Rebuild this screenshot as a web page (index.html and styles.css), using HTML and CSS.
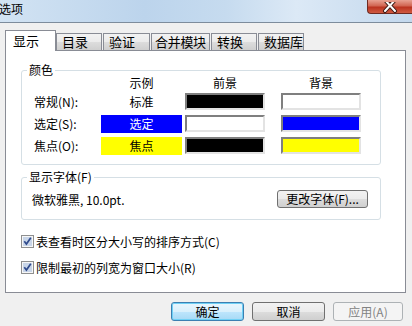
FILE: index.html
```html
<!DOCTYPE html>
<html lang="zh-CN">
<head>
<meta charset="UTF-8">
<title>选项</title>
<link rel="stylesheet" href="styles.css">
</head>
<body>

<div class="titlebar">
  <span class="title">选项</span>
  <div class="close-btn">
    <svg width="16" height="11" viewBox="0 0 16 11">
      <path d="M3 -2 L13 9 M13 -2 L3 9" stroke="#3d1a16" stroke-width="4" stroke-linecap="round"/>
      <path d="M3 -2 L13 9 M13 -2 L3 9" stroke="#ffffff" stroke-width="2" stroke-linecap="round"/>
    </svg>
  </div>
</div>

<div class="client">
  <div class="tabs">
    <div class="tab tab-active">显示</div>
    <div class="tab tab-w46">目录</div>
    <div class="tab tab-w47">验证</div>
    <div class="tab tab-w59">合并模块</div>
    <div class="tab tab-w46">转换</div>
    <div class="tab tab-w46">数据库</div>
  </div>

  <div class="panel">
    <fieldset class="group">
      <legend>颜色</legend>
      <div class="color-grid">
        <span></span>
        <span class="col-head">示例</span>
        <span class="col-head col-fg">前景</span>
        <span class="col-head">背景</span>

        <span class="row-label">常规(N):</span>
        <span class="sample">标准</span>
        <span class="swatch swatch-fg sw-black"></span>
        <span class="swatch sw-white"></span>

        <span class="row-label">选定(S):</span>
        <span class="sample sample-blue">选定</span>
        <span class="swatch swatch-fg sw-white"></span>
        <span class="swatch sw-blue"></span>

        <span class="row-label">焦点(O):</span>
        <span class="sample sample-yellow">焦点</span>
        <span class="swatch swatch-fg sw-black"></span>
        <span class="swatch sw-yellow"></span>
      </div>
    </fieldset>

    <fieldset class="group group-font">
      <legend>显示字体(F)</legend>
      <div class="font-row">
        <span>微软雅黑, 10.0pt.</span>
        <button class="btn btn-font">更改字体(F)...</button>
      </div>
    </fieldset>

    <label class="check check-first">
      <svg width="13" height="13" viewBox="0 0 13 13">
        <rect x="0.5" y="0.5" width="12" height="12" fill="#f6f6f6" stroke="#8e8f8f"/>
        <rect x="2" y="2" width="9" height="9" fill="#c8d5e8"/>
        <path d="M3.3 6.3 L5.4 9 L9.8 2.8" stroke="#2f4a8c" stroke-width="1.7" fill="none"/>
      </svg>
      <span>表查看时区分大小写的排序方式(C)</span>
    </label>
    <label class="check">
      <svg width="13" height="13" viewBox="0 0 13 13">
        <rect x="0.5" y="0.5" width="12" height="12" fill="#f6f6f6" stroke="#8e8f8f"/>
        <rect x="2" y="2" width="9" height="9" fill="#c8d5e8"/>
        <path d="M3.3 6.3 L5.4 9 L9.8 2.8" stroke="#2f4a8c" stroke-width="1.7" fill="none"/>
      </svg>
      <span>限制最初的列宽为窗口大小(R)</span>
    </label>
  </div>

  <div class="footer">
    <button class="btn btn-default">确定</button>
    <button class="btn">取消</button>
    <button class="btn btn-disabled btn-apply">应用(A)</button>
  </div>
</div>

</body>
</html>
```

FILE: styles.css
```css
body {
  margin: 0;
  width: 412px;
  height: 326px;
  overflow: hidden;
  font-family: "Noto Sans CJK SC", "Liberation Sans", sans-serif;
  font-size: 12px;
  color: #000;
  background-color: #f0f0f0;
}

.titlebar {
  display: flex;
  align-items: flex-start;
  height: 22px;
  border-bottom: 1px solid #7d8c9c;
  background: linear-gradient(to right, #d2e3f3 0%, #bcd4ec 35%, #c6dbef 55%, #dce9f6 72%, #c3d8ed 100%);
}

.title {
  margin-left: -1px;
  margin-top: 2px;
  line-height: 14px;
}

.close-btn {
  display: flex;
  justify-content: center;
  align-items: flex-end;
  margin-left: auto;
  width: 44px;
  height: 13px;
  border-left: 1px solid #6f2b22;
  border-bottom: 1px solid #6f2b22;
  border-radius: 0 0 0 4px;
  background: linear-gradient(#e8a192, #d16552 45%, #bb3320 55%, #cf5a41);
}

.client {
  padding: 7px 6px 0 5px;
}

.tabs {
  display: flex;
  align-items: flex-end;
  height: 20px;
  font-size: 13px;
}

.tab {
  box-sizing: border-box;
  height: 17px;
  margin-left: 1px;
  padding-left: 5px;
  line-height: 16px;
  white-space: nowrap;
  overflow: hidden;
  border: 1px solid #898c95;
  border-bottom: none;
  background: linear-gradient(#f2f2f2, #ebebeb 50%, #dddddd 50%, #cfcfcf);
}

.tab-active {
  position: relative;
  z-index: 1;
  width: 51px;
  height: 21px;
  margin-left: 0;
  margin-bottom: -1px;
  padding-left: 7px;
  line-height: 20px;
  background: #fff;
}

.tab-w46 { width: 46px; }
.tab-w47 { width: 47px; }

.tab-w59 {
  width: 59px;
  padding-left: 3px;
  letter-spacing: -0.3px;
}

.tabs .tab-active + .tab {
  margin-left: 0;
}

.panel {
  box-sizing: border-box;
  height: 243px;
  border: 1px solid #898c95;
  background-color: #fff;
  overflow: hidden;
}

.group {
  box-sizing: border-box;
  width: 360px;
  margin: 12px 0 0 15px;
  padding: 0;
  border: 1px solid #d5dfe5;
  border-radius: 3px;
}

.group legend {
  margin-left: 5px;
  padding: 0 2px;
  line-height: 14px;
}

.group-font {
  margin-top: 5px;
}

.color-grid {
  display: grid;
  grid-template-columns: 67px 81px 99px 80px;
  grid-template-rows: 11px repeat(3, 17px);
  row-gap: 5px;
  align-items: center;
  padding: 0 0 10px 12px;
}

.col-head {
  text-align: center;
  line-height: 11px;
}

.col-fg {
  width: 80px;
  margin-left: 3px;
}

.row-label {
  line-height: 17px;
}

.sample {
  height: 18px;
  line-height: 18px;
  text-align: center;
}

.sample-blue {
  background-color: #0000ff;
  color: #fff;
}

.sample-yellow {
  background-color: #ffff00;
}

.swatch {
  box-sizing: border-box;
  width: 80px;
  height: 17px;
  border: 2px solid;
  border-color: #7f7f7f #e3e3e3 #e3e3e3 #7f7f7f;
}

.swatch-fg {
  margin-left: 3px;
}

.sw-black { background-color: #000; }
.sw-white { background-color: #fff; }
.sw-blue { background-color: #0000ff; }
.sw-yellow { background-color: #ffff00; }

.font-row {
  display: flex;
  justify-content: space-between;
  align-items: center;
  padding: 6px 12px 11px 10px;
}

.check {
  display: flex;
  align-items: center;
  gap: 2px;
  height: 13px;
  margin: 13px 0 0 15px;
  line-height: 13px;
}

.check-first {
  margin-top: 15px;
}

.check svg {
  flex: none;
}

.footer {
  display: flex;
  justify-content: flex-end;
  gap: 8px;
  margin-top: 9px;
  padding-right: 3px;
}

.btn {
  box-sizing: border-box;
  width: 73px;
  height: 19px;
  padding: 0;
  font: inherit;
  line-height: 17px;
  color: #000;
  border: 1px solid #707070;
  border-radius: 3px;
  background: linear-gradient(#f2f2f2, #ebebeb 50%, #dddddd 50%, #cfcfcf);
}

.btn-font {
  width: 91px;
  height: 18px;
  line-height: 16px;
}

.btn-default {
  border-color: #3c7fb1;
  box-shadow: inset 0 0 0 1px #6fd0f5;
  background: linear-gradient(#eaf6fd, #d9f0fc 50%, #bee6fd 50%, #a7d9f5);
}

.btn-disabled {
  color: #838383;
  border-color: #adb2b5;
  background: #f4f4f4;
}

.btn-apply {
  width: 70px;
}
```
